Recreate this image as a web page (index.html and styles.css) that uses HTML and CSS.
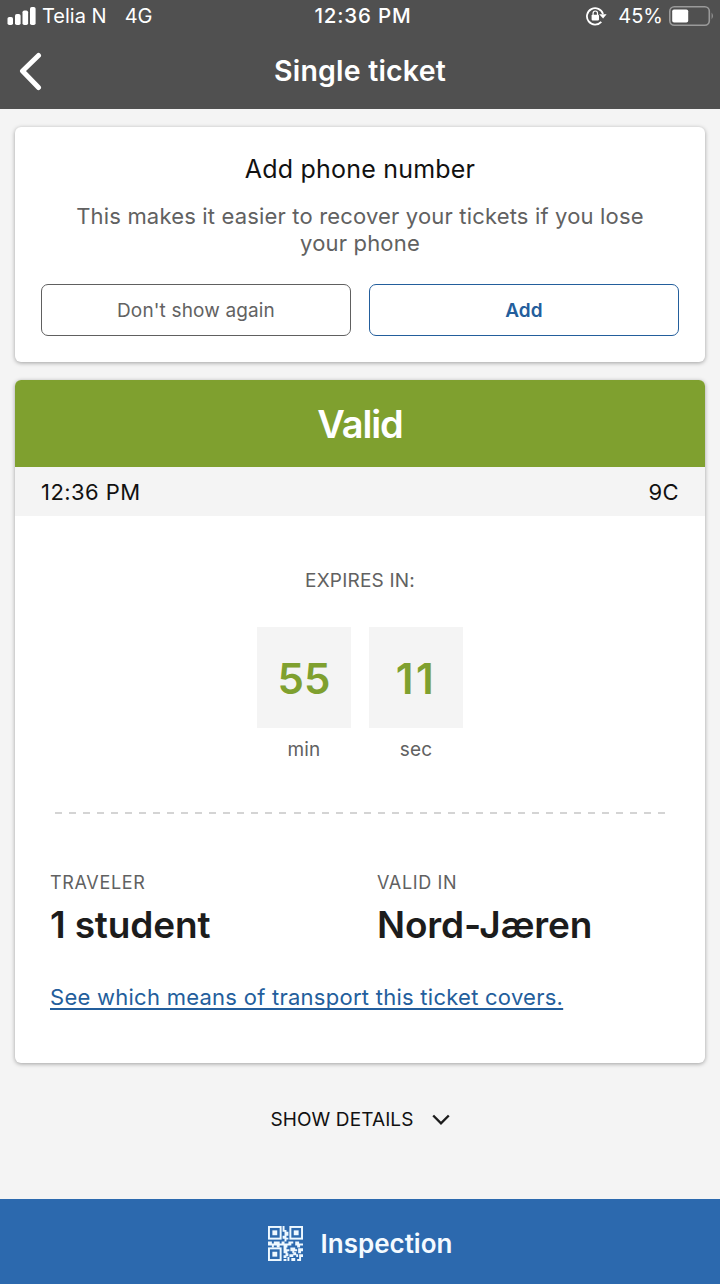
FILE: index.html
```
<!DOCTYPE html>
<html lang="en">

<head>
    <meta charset="UTF-8">
    <meta name="viewport" content="width=device-width, initial-scale=1.0">
    <title>Single ticket</title>
    <link rel="stylesheet" href="styles.css">
</head>

<body>
    <header class="header">
        <div class="status-bar">
            <div class="status-left">
                <svg class="signal" width="29" height="18" viewBox="0 0 29 18" fill="#fff">
                    <rect x="0.500" y="10" width="5.500" height="8" rx="1.8" />
                    <rect x="8" y="7" width="5.600" height="11" rx="1.8" />
                    <rect x="15.500" y="3.5" width="5.600" height="14.5" rx="1.8" />
                    <rect x="23" y="0" width="5.6" height="18" rx="1.8" />
                </svg>
                <span class="carrier">Telia N</span>
                <span class="network">4G</span>
            </div>
            <span class="clock">12:36 PM</span>
            <div class="status-right">
                <svg class="lock" width="22" height="20" viewBox="0 0 22 20">
                    <path d="M15.300 15.800A8.200 8.200 0 1 1 17 8" fill="none" stroke="#fff" stroke-width="1.8" />
                    <path d="M13.200 8.200h7.400l-3.500 4.400z" fill="#fff" />
                    <rect x="5.6" y="8.8" width="7.4" height="5.6" rx=".8" fill="#fff" />
                    <path d="M7.100 9V7.2a2.2 2.2 0 0 1 4.4 0V9" fill="none" stroke="#fff" stroke-width="1.2" />
                </svg>
                <span class="percent">45%</span>
                <svg class="battery" width="46" height="20" viewBox="0 0 46 20">
                    <rect x=".8" y=".8" width="39.500" height="18.4" rx="4.5" fill="none" stroke="#9a9a9a" stroke-width="1.6" />
                    <rect x="3.2" y="3.5" width="16" height="13" rx="1.8" fill="#fff" />
                    <path d="M42.6 6.6q2.6 3.4 0 6.8z" fill="#9a9a9a" />
                </svg>
            </div>
        </div>
        <div class="title-bar">
            <svg class="back" width="24" height="40" viewBox="0 0 24 40">
                <path d="M20.500 4.500L4.500 20L20.500 36.500" fill="none" stroke="#fff" stroke-width="5" stroke-linecap="round" stroke-linejoin="round" />
            </svg>
            <h1>Single ticket</h1>
        </div>
    </header>

    <main class="content">
        <section class="card phone-card">
            <h2>Add phone number</h2>
            <p>This makes it easier to recover your tickets if you lose<br>your phone</p>
            <div class="buttons">
                <button class="btn">Don't show again</button>
                <button class="btn btn-add">Add</button>
            </div>
        </section>

        <section class="card ticket">
            <div class="valid"><span>Valid</span></div>
            <div class="info-row">
                <span class="info-time">12:36 PM</span>
                <span class="info-code">9C</span>
            </div>
            <div class="ticket-body">
                <p class="expires">EXPIRES IN:</p>
                <div class="countdown">
                    <div class="unit">
                        <div class="number">55</div>
                        <span>min</span>
                    </div>
                    <div class="unit">
                        <div class="number number-sec">11</div>
                        <span>sec</span>
                    </div>
                </div>
                <div class="divider"></div>
                <div class="details">
                    <div>
                        <p class="label">TRAVELER</p>
                        <p class="value">1 student</p>
                    </div>
                    <div>
                        <p class="label">VALID IN</p>
                        <p class="value">Nord-Jæren</p>
                    </div>
                </div>
                <a class="link" href="#">See which means of transport this ticket covers.</a>
            </div>
        </section>

        <div class="show-details">
            <span>SHOW DETAILS</span>
            <svg width="18" height="12" viewBox="0 0 18 12">
                <path d="M1.200 1.500L9 9.300L16.800 1.500" fill="none" stroke="#1c1c1c" stroke-width="2.400" />
            </svg>
        </div>
    </main>

    <footer class="inspection">
        <svg width="35" height="35" viewBox="0 0 36 36">
            <!-- finder squares -->
            <g fill="none" stroke="#eef8ff" stroke-width="2">
                <rect x="1" y="1" width="12" height="12" />
                <rect x="23" y="1" width="12" height="12" />
                <rect x="1" y="23" width="12" height="12" />
            </g>
            <g fill="#eef8ff">
                <rect x="4.500" y="4.500" width="5" height="5" />
                <rect x="26.500" y="4.500" width="5" height="5" />
                <rect x="4.500" y="26.500" width="5" height="5" />
                <!-- data modules -->
                <path d="M15 0h2v4h2v2h2v4h-2v2h2v2h-2v2h-2v-3h-2v-3h2v-4h-2zM0 16h4v2h2v-2h6v2h2v-2h3v2h4v-2h5v2h-2v2h-4v2h-4v-2h-4v2h-3v-2h-3v2h-2v-2h-4zM28 16h4v2h4v2h-3v2h-3v-2h-2zM16 22h3v2h3v2h-2v2h-4zM23 22h5v2h2v2h-3v2h-2v-2h-2zM31 23h5v3h-2v2h-3zM16 30h2v-2h3v3h-2v2h-3zM22 29h4v-2h3v2h2v3h-2v-2h-3v2h-4zM32 29h4v3h-2v4h-4v-2h2zM16 34h3v2h-3zM20 32h2v4h-2zM24 33h4v3h-4z" />
            </g>
        </svg>
        <span>Inspection</span>
    </footer>
</body>

</html>
```
FILE: styles.css
```
* {
    box-sizing: border-box;
}

body {
    margin: 0;
    height: 1284px;
    display: flex;
    flex-direction: column;
    background: #f4f4f4;
    color: #111;
    font-family: Inter, "Liberation Sans", sans-serif;
}

h1, h2, p {
    margin: 0;
    font-weight: 400;
}

span, h1, h2, .label, .value, .expires, .link {
    white-space: nowrap;
}

.header {
    height: 109px;
    background: #505050;
    color: #fff;
}

.status-bar {
    height: 32px;
    display: grid;
    grid-template-columns: 1fr auto 1fr;
    align-items: center;
    padding: 0 5px 0 7px;
    font-size: 20px;
    line-height: 32px;
}

.status-left,
.status-right {
    display: flex;
    align-items: center;
}

.status-left {
    height: 31px;
}

.status-right {
    justify-content: flex-end;
    height: 30px;
}

.carrier {
    margin-left: 6px;
}

.network {
    margin-left: 18px;
}

.clock {
    font-weight: 500;
    font-size: 20.500px;
    letter-spacing: 0.8px;
    padding-left: 4px;
}

.percent {
    margin: 0 6px 0 10px;
}

.title-bar {
    height: 77px;
    display: grid;
    grid-template-columns: 24px 1fr 24px;
    align-items: center;
    padding: 0 18px;
}

.title-bar h1 {
    font-size: 28.500px;
    font-weight: 600;
    letter-spacing: 0.2px;
    text-align: center;
}

.content {
    flex: 1;
    padding: 18px 15px 0;
}

.card {
    background: #fff;
    border-radius: 6px;
    box-shadow: 0 1px 4px rgba(0, 0, 0, 0.35);
}

.phone-card {
    height: 235px;
    padding: 25px 26px 0;
    text-align: center;
}

.phone-card h2 {
    font-size: 25px;
    letter-spacing: 0.200px;
    line-height: 34px;
}

.phone-card p {
    margin-top: 17px;
    font-size: 22px;
    letter-spacing: 0.170px;
    line-height: 27px;
    color: #616161;
}

.buttons {
    display: flex;
    gap: 18px;
    margin-top: 27px;
}

.btn {
    flex: 1;
    height: 52px;
    padding: 0;
    border: 1.500px solid #606060;
    border-radius: 7px;
    background: #fff;
    color: #626262;
    font-family: inherit;
    font-size: 19px;
    letter-spacing: 0.150px;
}

.btn-add {
    border-color: #235e9c;
    color: #235e9c;
    font-weight: 600;
}

.ticket {
    margin-top: 18px;
    height: 683px;
    overflow: hidden;
}

.valid {
    height: 87px;
    background: #7fa02f;
    color: #fff;
    font-size: 38px;
    font-weight: 600;
    letter-spacing: -1.100px;
    line-height: 89px;
    text-align: center;
}

.info-row {
    height: 49px;
    display: flex;
    justify-content: space-between;
    align-items: center;
    padding: 0 26px;
    background: #f4f4f4;
    font-size: 22px;
    letter-spacing: 0.450px;
}

.ticket-body {
    padding: 0 35px;
}

.expires {
    padding-top: 53px;
    font-size: 19px;
    letter-spacing: 0.200px;
    line-height: 24px;
    text-align: center;
    color: #616161;
}

.countdown {
    display: flex;
    justify-content: center;
    gap: 18px;
    margin-top: 34px;
}

.unit {
    width: 94px;
    text-align: center;
    font-size: 19px;
    letter-spacing: 0.200px;
    line-height: 24px;
    color: #616161;
}

.number {
    height: 101px;
    margin-bottom: 10px;
    background: #f4f4f4;
    color: #7fa02f;
    font-size: 42px;
    font-weight: 600;
    letter-spacing: 0;
    line-height: 103px;
}

.number-sec {
    letter-spacing: 2.500px;
}

.divider {
    height: 2px;
    margin: 50px 5px 0;
    background: repeating-linear-gradient(to right, #d4d4d4 0 7px, transparent 7px 14.030px);
}

.details {
    display: grid;
    grid-template-columns: 327px 1fr;
    margin-top: 57px;
}

.label {
    font-size: 18px;
    letter-spacing: 0.650px;
    line-height: 24px;
    color: #616161;
}

.value {
    margin-top: 6px;
    font-size: 37px;
    font-weight: 600;
    letter-spacing: -0.150px;
    line-height: 48px;
    color: #1c1c1c;
}

.link {
    display: inline-block;
    margin-top: 33px;
    font-size: 22px;
    letter-spacing: 0.260px;
    line-height: 30px;
    color: #235e9c;
    text-underline-offset: 3px;
    text-decoration-thickness: 2px;
    text-decoration-skip-ink: none;
}

.show-details {
    display: flex;
    justify-content: center;
    align-items: center;
    gap: 18px;
    margin-top: 45px;
    font-size: 19px;
    letter-spacing: 0.100px;
    line-height: 24px;
}

.inspection {
    height: 85px;
    display: flex;
    justify-content: center;
    align-items: center;
    gap: 18px;
    padding-top: 3px;
    background: #2c69ae;
    color: #f4faff;
    font-size: 26px;
    font-weight: 600;
}
```
